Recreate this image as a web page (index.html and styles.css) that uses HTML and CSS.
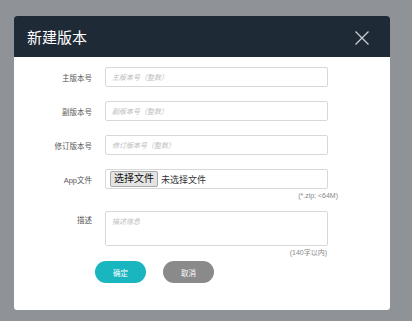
FILE: index.html
```html
<!DOCTYPE html>
<html lang="zh-CN">
<head>
    <meta charset="UTF-8">
    <meta name="viewport" content="width=device-width, initial-scale=1.0">
    <title>新建版本</title>
    <link rel="stylesheet" href="styles.css">
</head>
<body>
    <div class="modal">
        <div class="modal-header">
            <h2>新建版本</h2>
            <button class="close-button" aria-label="关闭">
                <svg width="16" height="16" viewBox="0 0 16 16">
                    <path d="M1.5 1.5 L14.5 14.5 M14.5 1.5 L1.5 14.5" stroke="#c9ced4" stroke-width="1.3" fill="none"/>
                </svg>
            </button>
        </div>
        <div class="modal-body">
            <div class="form-row">
                <label>主版本号</label>
                <input type="text" placeholder="主版本号（整数）">
            </div>
            <div class="form-row">
                <label>副版本号</label>
                <input type="text" placeholder="副版本号（整数）">
            </div>
            <div class="form-row">
                <label>修订版本号</label>
                <input type="text" placeholder="修订版本号（整数）">
            </div>
            <div class="form-row file-row">
                <label>App文件</label>
                <div class="file-box">
                    <span class="file-button">选择文件</span>
                    <span class="file-name">未选择文件</span>
                </div>
            </div>
            <p class="hint hint-file">(*.zip; &lt;64M)</p>
            <div class="form-row text-row">
                <label>描述</label>
                <textarea placeholder="描述信息"></textarea>
            </div>
            <p class="hint hint-text">(140字以内)</p>
            <div class="actions">
                <button class="btn btn-ok">确定</button>
                <button class="btn btn-cancel">取消</button>
            </div>
        </div>
    </div>
</body>
</html>
```

FILE: styles.css
```css
* {
    margin: 0;
    padding: 0;
    box-sizing: border-box;
    font-family: "Liberation Sans", "Noto Sans CJK SC", sans-serif;
}

body {
    background: #8f9297;
    width: 412px;
    height: 321px;
    overflow: hidden;
}

.modal {
    width: 376px;
    margin: 16px 0 0 14px;
    background: white;
    border-radius: 3px;
    overflow: hidden;
}

.modal-header {
    height: 41px;
    background: #1f2a37;
    display: flex;
    align-items: center;
    justify-content: space-between;
    padding: 0 20px 0 13px;
}

.modal-header h2 {
    color: #fff;
    font-size: 15px;
    font-weight: normal;
}

.close-button {
    background: none;
    border: none;
    display: flex;
    margin-top: 2px;
}

.modal-body {
    padding: 10px 0 27px;
}

.form-row {
    display: flex;
    align-items: center;
    margin-bottom: 14px;
}

.form-row label {
    width: 78px;
    text-align: right;
    font-size: 7.5px;
    color: #555;
    margin-right: 13px;
}

.form-row input,
.form-row textarea,
.file-box {
    width: 223px;
    height: 20px;
    border: 1px solid #d8d8d8;
    border-radius: 2px;
    padding: 0 6px;
    font-size: 7px;
    color: #333;
}

.form-row input::placeholder,
.form-row textarea::placeholder {
    color: #bbb;
    font-style: italic;
}

.file-row {
    margin-bottom: 1px;
}

.file-box {
    display: flex;
    align-items: center;
    padding: 0 4px;
}

.file-button {
    background: #e4e4e4;
    border: 1px solid #a8a8a8;
    border-radius: 2px;
    font-size: 10px;
    color: #111;
    padding: 1px 3px;
    line-height: 12px;
}

.file-name {
    font-size: 9px;
    color: #333;
    margin-left: 3px;
}

.hint {
    font-size: 7px;
    color: #888;
    text-align: right;
    line-height: 12px;
}

.hint-file {
    padding-right: 52px;
    margin-bottom: 9px;
}

.text-row {
    align-items: flex-start;
    margin-bottom: 1px;
}

.text-row label {
    padding-top: 3px;
}

.form-row textarea {
    height: 35px;
    resize: none;
    padding: 4px 6px;
}

.hint-text {
    padding-right: 63px;
}

.actions {
    display: flex;
    gap: 17px;
    padding-left: 81px;
    margin-top: 2px;
}

.btn {
    width: 51px;
    height: 22px;
    border: none;
    border-radius: 11px;
    color: #fff;
    font-size: 7.5px;
    font-family: "Noto Sans CJK SC", sans-serif;
}

.btn-ok {
    background: #19b6c0;
}

.btn-cancel {
    background: #8a8a8a;
}
```
